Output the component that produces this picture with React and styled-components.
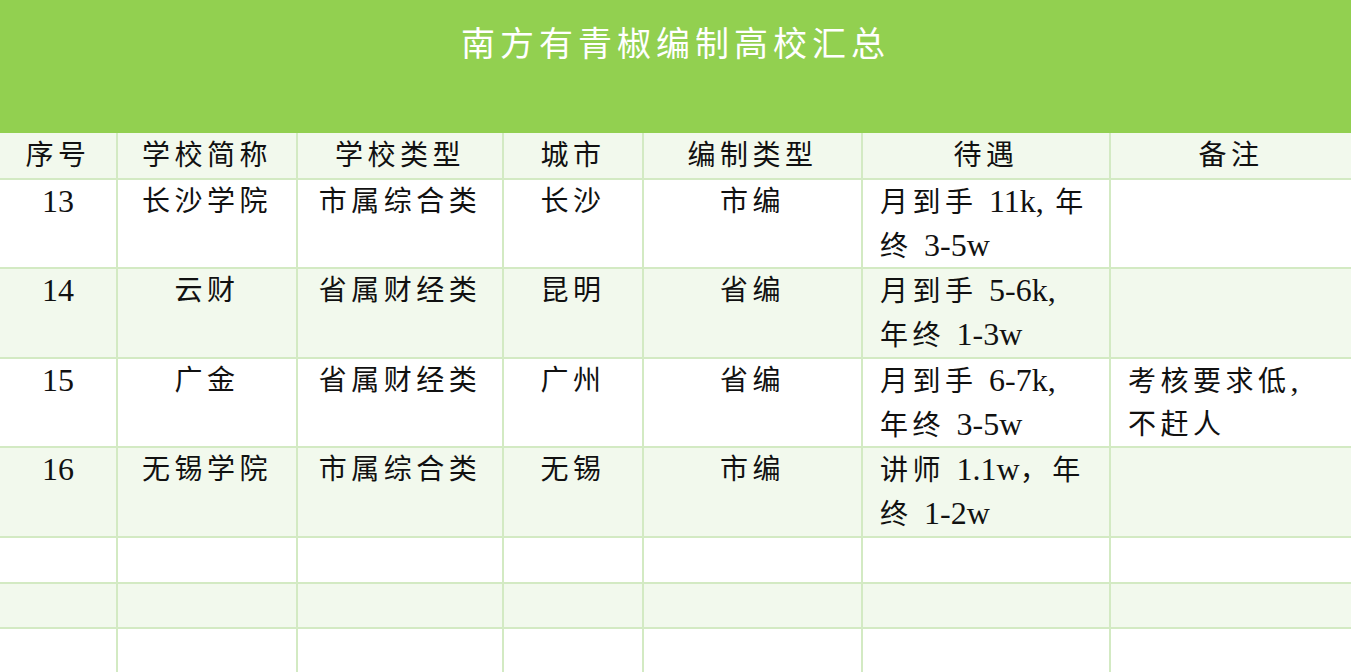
import React from 'react';
import styled, { createGlobalStyle } from 'styled-components';

const GlobalStyle = createGlobalStyle`
  html, body {
    margin: 0;
    padding: 0;
    background: #ffffff;
    overflow: hidden;
  }
  body {
    font-family: "Liberation Serif", "Noto Sans CJK SC", serif;
  }
`;

const LINE = '#d3eac3';
const TINT = '#f2f9ed';

const Page = styled.div`
  width: 1351px;
  height: 672px;
  overflow: hidden;
`;

const Banner = styled.div`
  height: 133px;
  background: #92d050;
  display: flex;
  justify-content: center;
  padding-top: 24px;
  box-sizing: border-box;
`;

const Title = styled.h1`
  margin: 0;
  color: #ffffff;
  font-size: 34px;
  font-weight: 400;
  letter-spacing: 5px;
  line-height: 42px;
  height: 42px;
`;

const Grid = styled.div`
  display: grid;
  grid-template-columns: 116px 178px 204px 138px 217px 246px 1fr;
  grid-template-rows: 45px 87px 88px 87px 88px 44px 43px 43px;
  gap: 2px;
  background: ${LINE};
`;

const Cell = styled.div`
  background: ${(p) => (p.$tinted ? TINT : '#ffffff')};
  color: #111;
  font-size: 28px;
  letter-spacing: 4.5px;
  line-height: ${(p) => (p.$head ? '45px' : '43px')};
  text-align: ${(p) => (p.$left ? 'left' : 'center')};
  padding: ${(p) => (p.$left ? '0 0 0 17px' : '0')};
  white-space: nowrap;
  overflow: hidden;
`;

const Latin = styled.span`
  font-size: 32px;
  letter-spacing: 0;
`;

const columns = ['序号', '学校简称', '学校类型', '城市', '编制类型', '待遇', '备注'];

const rows = [
  ['13', '长沙学院', '市属综合类', '长沙', '市编', ['月到手 11k, 年', '终 3-5w'], []],
  ['14', '云财', '省属财经类', '昆明', '省编', ['月到手 5-6k,', '年终 1-3w'], []],
  ['15', '广金', '省属财经类', '广州', '省编', ['月到手 6-7k,', '年终 3-5w'], ['考核要求低,', '不赶人']],
  ['16', '无锡学院', '市属综合类', '无锡', '市编', ['讲师 1.1w，年', '终 1-2w'], []],
];

const emptyRows = 3;

// split text so latin runs get their own size and spacing
function Text({ value }) {
  const parts = value.split(/([0-9A-Za-z.,\-]+)/).filter(Boolean);
  return parts.map((p, i) =>
    /^[0-9A-Za-z.,\-]+$/.test(p) ? <Latin key={i}>{p}</Latin> : <React.Fragment key={i}>{p}</React.Fragment>
  );
}

function Lines({ lines }) {
  return lines.map((l, i) => (
    <div key={i}>
      <Text value={l} />
    </div>
  ));
}

export default function App() {
  return (
    <Page>
      <GlobalStyle />
      <Banner>
        <Title>南方有青椒编制高校汇总</Title>
      </Banner>
      <Grid>
        {columns.map((c) => (
          <Cell key={c} $head $tinted>
            {c}
          </Cell>
        ))}
        {rows.map((r, ri) =>
          r.map((v, ci) => (
            <Cell key={`${ri}-${ci}`} $tinted={ri % 2 === 1} $left={ci >= 5}>
              {Array.isArray(v) ? <Lines lines={v} /> : <Text value={v} />}
            </Cell>
          ))
        )}
        {Array.from({ length: emptyRows }).map((_, ri) =>
          columns.map((c) => <Cell key={`e${ri}-${c}`} $tinted={ri % 2 === 1} />)
        )}
      </Grid>
    </Page>
  );
}
